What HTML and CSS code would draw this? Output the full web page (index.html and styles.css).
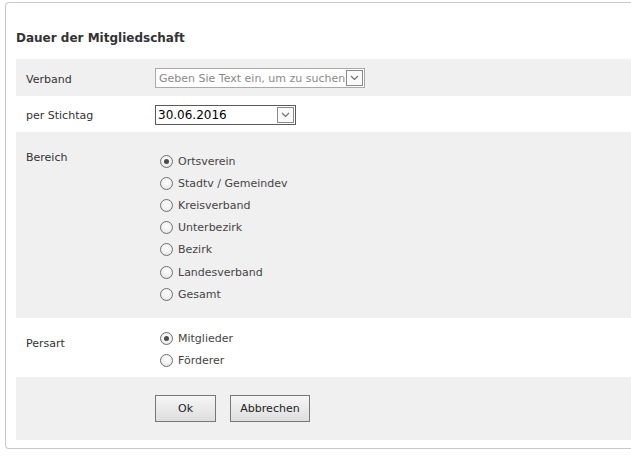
FILE: index.html
```html
<!DOCTYPE html>
<html lang="de">
<head>
<meta charset="utf-8">
<title>Dauer der Mitgliedschaft</title>
<link rel="stylesheet" href="styles.css">
</head>
<body>
<div class="panel">
  <h1 class="title">Dauer der Mitgliedschaft</h1>
  <div class="row row-gray row-verband">
    <div class="label">Verband</div>
    <div class="field">
      <div class="combo">
        <span class="placeholder">Geben Sie Text ein, um zu suchen</span>
        <span class="arrow"><svg width="9" height="6" viewBox="0 0 9 6"><path d="M1 1 L4.5 4.5 L8 1" fill="none" stroke="#6f6f6f" stroke-width="1.2"/></svg></span>
      </div>
    </div>
  </div>
  <div class="row row-stichtag">
    <div class="label">per Stichtag</div>
    <div class="field">
      <div class="select">
        <span class="value">30.06.2016</span>
        <span class="arrow"><svg width="9" height="6" viewBox="0 0 9 6"><path d="M1 1 L4.5 4.5 L8 1" fill="none" stroke="#6f6f6f" stroke-width="1.2"/></svg></span>
      </div>
    </div>
  </div>
  <div class="row row-gray row-bereich">
    <div class="label">Bereich</div>
    <div class="field radios">
      <label class="radio"><span class="dot checked"></span>Ortsverein</label>
      <label class="radio"><span class="dot"></span>Stadtv / Gemeindev</label>
      <label class="radio"><span class="dot"></span>Kreisverband</label>
      <label class="radio"><span class="dot"></span>Unterbezirk</label>
      <label class="radio"><span class="dot"></span>Bezirk</label>
      <label class="radio"><span class="dot"></span>Landesverband</label>
      <label class="radio"><span class="dot"></span>Gesamt</label>
    </div>
  </div>
  <div class="row row-persart">
    <div class="label">Persart</div>
    <div class="field radios">
      <label class="radio"><span class="dot checked"></span>Mitglieder</label>
      <label class="radio"><span class="dot"></span>Förderer</label>
    </div>
  </div>
  <div class="row row-gray row-buttons">
    <div class="label"></div>
    <div class="field buttons">
      <button class="btn btn-ok">Ok</button>
      <button class="btn btn-cancel">Abbrechen</button>
    </div>
  </div>
</div>
</body>
</html>
```

FILE: styles.css
```css
html, body {
  margin: 0;
  padding: 0;
  background: #ffffff;
  overflow: hidden;
}
body {
  font-family: "DejaVu Sans", Verdana, sans-serif;
  font-size: 11px;
  color: #333333;
}
.panel {
  margin: 2px 0 0 5px;
  height: 447px;
  border: 1px solid #c9c9c9;
  border-right: 0;
  border-radius: 4px 0 0 4px;
  padding: 0 0 0 10px;
  box-sizing: border-box;
}
.title {
  margin: 0;
  height: 56px;
  padding-top: 27px;
  box-sizing: border-box;
  font-size: 12px;
  font-weight: bold;
  color: #333333;
  line-height: 16px;
}
.row {
  display: grid;
  grid-template-columns: 139px 1fr;
  box-sizing: border-box;
}
.row-gray {
  background: #f0f0f0;
}
.label {
  padding-left: 10px;
  line-height: 14px;
}
.row-verband {
  height: 37px;
  padding-top: 9px;
}
.row-verband .label {
  padding-top: 5px;
}
.combo {
  width: 210px;
  height: 20px;
  box-sizing: border-box;
  border: 1px solid #a9a9a9;
  background: #ffffff;
  display: flex;
  align-items: center;
  padding-left: 3px;
  overflow: hidden;
}
.placeholder {
  flex: 1;
  color: #8a8a8a;
  white-space: nowrap;
  overflow: hidden;
}
.arrow {
  width: 17px;
  height: 16px;
  box-sizing: border-box;
  border: 1px solid #8a8a8a;
  background: #fafafa;
  display: flex;
  align-items: center;
  justify-content: center;
  margin-right: 1px;
  flex: none;
}
.row-stichtag {
  height: 36px;
  padding-top: 9px;
}
.row-stichtag .label {
  padding-top: 4px;
}
.select {
  width: 141px;
  height: 20px;
  box-sizing: border-box;
  border: 1px solid #5a5a5a;
  background: #ffffff;
  display: flex;
  align-items: center;
  padding-left: 2px;
}
.value {
  flex: 1;
  color: #000000;
  font-size: 12px;
}
.row-bereich {
  height: 186px;
  padding-top: 18px;
}
.row-bereich .label {
  padding-top: 1px;
}
.radios {
  display: flex;
  flex-direction: column;
}
.radio {
  display: flex;
  align-items: center;
  height: 22.2px;
  gap: 5px;
  padding-left: 5px;
  color: #444444;
  white-space: nowrap;
}
.dot {
  width: 13px;
  height: 13px;
  box-sizing: border-box;
  border-radius: 50%;
  border: 1px solid #707070;
  background: radial-gradient(circle at 50% 40%, #ffffff 0%, #f0f0f0 55%, #d8d8d8 100%);
  position: relative;
  flex: none;
}
.dot.checked::after {
  content: "";
  position: absolute;
  left: 3px;
  top: 3px;
  width: 5px;
  height: 5px;
  border-radius: 50%;
  background: #4a4a4a;
}
.row-persart {
  height: 59px;
  padding-top: 8px;
}
.row-persart .radios {
  padding-top: 1px;
}
.row-persart .label {
  padding-top: 11px;
}
.row-buttons {
  height: 63px;
  padding-top: 18px;
}
.buttons {
  display: flex;
  gap: 14px;
  align-items: flex-start;
}
.btn {
  height: 27px;
  box-sizing: border-box;
  border: 1px solid #777777;
  border-radius: 0;
  background: linear-gradient(#f6f6f6, #dedede);
  font-family: "DejaVu Sans", Verdana, sans-serif;
  font-size: 11px;
  color: #222222;
  padding: 0;
}
.btn-ok {
  width: 61px;
}
.btn-cancel {
  width: 80px;
}
```
